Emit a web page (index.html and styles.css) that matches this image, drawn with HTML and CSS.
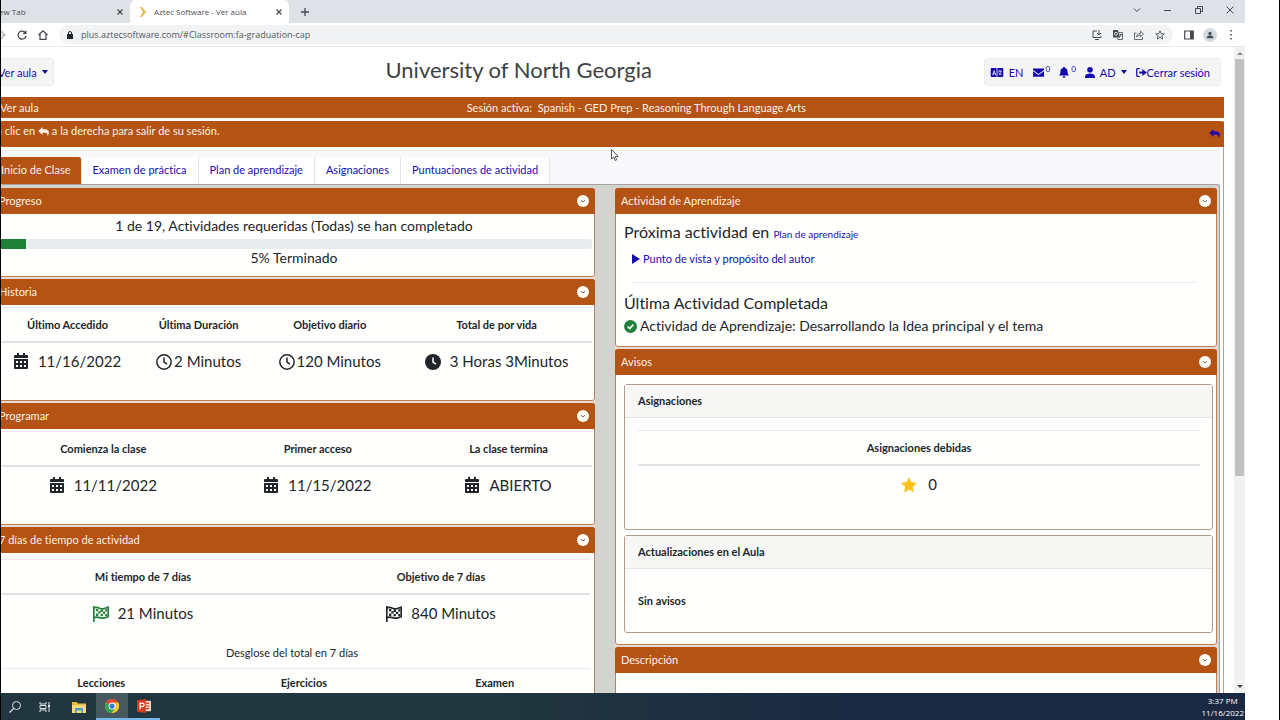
FILE: index.html
```html
<!DOCTYPE html>
<html lang="es">

<head>
  <meta charset="UTF-8" />
  <meta name="viewport" content="width=device-width, initial-scale=1.0" />
  <title>Aztec Software - Ver aula</title>
  <link rel="stylesheet" href="styles.css">
</head>

<body>
  <!-- shared icons -->
  <svg class="sprite" aria-hidden="true">
    <symbol id="calendar" viewBox="0 0 14 16">
      <path d="M3 0h2v2h4V0h2v2h2a1 1 0 0 1 1 1v2H0V3a1 1 0 0 1 1-1h2zM0 6h14v9a1 1 0 0 1-1 1H1a1 1 0 0 1-1-1zm2 2v2h2V8zm4 0v2h2V8zm4 0v2h2V8zM2 12v2h2v-2zm4 0v2h2v-2zm4 0v2h2v-2z" fill="currentColor" fill-rule="evenodd" />
    </symbol>
    <symbol id="clock" viewBox="0 0 16 16">
      <circle cx="8" cy="8" r="7.2" fill="none" stroke="currentColor" stroke-width="1.5" />
      <path d="M8 3.5V8l3 2.2" fill="none" stroke="currentColor" stroke-width="1.5" />
    </symbol>
    <symbol id="clock-solid" viewBox="0 0 16 16">
      <circle cx="8" cy="8" r="8" fill="currentColor" />
      <path d="M8 3.5V8l3 2.2" fill="none" stroke="#fff" stroke-width="1.5" />
    </symbol>
    <symbol id="flag" viewBox="0 0 16 16">
      <path d="M.8 0v16M1 2c4-2 6 1.500 9 .8 2-.4 3-1 5.200-1.600v9.600c-2.200.6-3.200 1.200-5.200 1.400-3 .4-5-2.400-9-.6" fill="none" stroke="currentColor" stroke-width="1.700" />
      <path d="M3 3h2.300v2.300H3zm4.600.6h2.300v2.300H7.600zM5.300 5.300h2.300v2.300H5.300zm4.600.4h2.300V8H9.900zM3 7.600h2.300v2.300H3zm4.600.4h2.300v2.300H7.600zm4.600-4.700h2V5.600h-2zm0 4.700h2v2h-2z" fill="currentColor" />
    </symbol>
    <symbol id="chevron" viewBox="0 0 12 12">
      <circle cx="6" cy="6" r="6" fill="#fffdf5" />
      <path d="M4 5.200l2 1.800 2-1.800" fill="none" stroke="#6b6b63" stroke-width="1" />
    </symbol>
    <symbol id="reply" viewBox="0 0 12 10">
      <path d="M5 0v2.500h2.500C10.500 2.500 12 4 12 6.500c0 1.500-.6 2.800-1.700 3.500.5-2.500-.5-3.700-3-3.700H5v2.500L0 4.400z" fill="currentColor" />
    </symbol>
    <symbol id="close" viewBox="0 0 8 8">
      <path d="M1.500 1.500l5 5M6.500 1.500l-5 5" fill="none" stroke="currentColor" stroke-width="1.200" />
    </symbol>
  </svg>

  <div class="window">
    <div class="tab-strip">
      <div class="browser-tab first-tab">
        <span>New Tab</span>
        <button class="icon-btn" aria-label="Close tab"><svg class="x"><use href="#close" /></svg></button>
      </div>
      <div class="browser-tab active">
        <svg class="favicon" viewBox="0 0 8 10"><path d="M1 0h2l4 5-4 5H1l3-5z" fill="#f0b445" /></svg>
        <span>Aztec Software - Ver aula</span>
        <button class="icon-btn" aria-label="Close tab"><svg class="x"><use href="#close" /></svg></button>
      </div>
      <button class="icon-btn new-tab" aria-label="New tab"><svg viewBox="0 0 8 8"><path d="M4 0v8M0 4h8" stroke="currentColor" stroke-width="1.300" /></svg></button>
      <div class="window-buttons">
        <button class="icon-btn" aria-label="Search tabs"><svg viewBox="0 0 8 8"><path d="M1 2.500l3 3 3-3" fill="none" stroke="currentColor" /></svg></button>
        <button class="icon-btn" aria-label="Minimize"><svg viewBox="0 0 8 8"><path d="M0 4.500h7" stroke="currentColor" /></svg></button>
        <button class="icon-btn" aria-label="Restore"><svg viewBox="0 0 8 8"><path d="M.5 2.500h5v5h-5zM2.500 2V.5h5v5H6" fill="none" stroke="currentColor" /></svg></button>
        <button class="icon-btn" aria-label="Close"><svg viewBox="0 0 8 8"><path d="M.5.5l7 7M7.500.5l-7 7" stroke="currentColor" /></svg></button>
      </div>
    </div>

    <div class="toolbar">
      <button class="icon-btn" aria-label="Forward"><svg viewBox="0 0 10 10"><path d="M0 5h9M5 1l4 4-4 4" fill="none" stroke="#b5b8bb" stroke-width="1.200" /></svg></button>
      <button class="icon-btn" aria-label="Reload"><svg viewBox="0 0 10 10"><path d="M8.500 3A4 4 0 1 0 9 6" fill="none" stroke="currentColor" stroke-width="1.300" /><path d="M9.500 0v4h-4z" fill="currentColor" /></svg></button>
      <button class="icon-btn" aria-label="Home"><svg viewBox="0 0 10 10"><path d="M.5 5L5 .8 9.500 5M2 4v5.300h6V4" fill="none" stroke="currentColor" stroke-width="1.200" /></svg></button>
      <div class="address">
        <svg class="lock" viewBox="0 0 6 8"><path d="M0 3h6v5H0z" fill="currentColor" /><path d="M1.500 3V2a1.500 1.500 0 0 1 3 0v1" fill="none" stroke="currentColor" /></svg>
        <input type="text" aria-label="Address" value="plus.aztecsoftware.com/#Classroom:fa-graduation-cap" />
        <button class="icon-btn" aria-label="Install"><svg viewBox="0 0 10 10"><path d="M5 1H1v6.500h8V6M3 9.500h4M7 0v4M5 3l2 2 2-2" fill="none" stroke="currentColor" /></svg></button>
        <button class="icon-btn" aria-label="Translate"><svg viewBox="0 0 10 10"><path d="M0 0h5l2 7.500H0z" fill="currentColor" /><path d="M6 2.500h3.500v7H5L4.500 8M6.500 4.500h2.500M7.700 4v1M6.500 7.500l2-3" fill="none" stroke="currentColor" stroke-width=".8" /><circle cx="3" cy="3.800" r="1.500" fill="none" stroke="#fff" stroke-width=".8" /></svg></button>
        <button class="icon-btn" aria-label="Share"><svg viewBox="0 0 10 10"><path d="M2.500 3H.5v6.500h8V7M2.500 7c.3-2.500 1.500-3.500 4-3.700V1.200L9.500 4l-3 2.700V5C5 5 3.500 5.500 2.500 7z" fill="none" stroke="currentColor" stroke-width=".8" /></svg></button>
        <button class="icon-btn" aria-label="Bookmark"><svg viewBox="0 0 10 10"><path d="M5 .8l1.200 2.900 3.100.2-2.400 2 .8 3.100L5 7.300 2.300 9l.8-3.100-2.400-2 3.100-.2z" fill="none" stroke="currentColor" stroke-width=".9" /></svg></button>
      </div>
      <div class="toolbar-end">
        <button class="icon-btn" aria-label="Side panel"><svg viewBox="0 0 10 10"><path d="M.7 1h8.600v8H.7z" fill="none" stroke="currentColor" stroke-width="1.200" /><path d="M6 1h3v8H6z" fill="currentColor" /></svg></button>
        <button class="icon-btn profile" aria-label="Profile"><svg viewBox="0 0 10 10"><circle cx="5" cy="3" r="2" fill="currentColor" /><path d="M1 9V8c0-3 8-3 8 0v1z" fill="currentColor" /></svg></button>
        <button class="icon-btn" aria-label="Menu"><svg viewBox="0 0 10 10"><path d="M4.300 0h1.500v1.500H4.300zm0 4h1.500v1.500H4.300zm0 4h1.500v1.500H4.300z" fill="currentColor" /></svg></button>
      </div>
    </div>

    <div class="viewport">
      <div class="page">
        <header class="site-header">
          <button class="class-menu">Ver aula <span class="caret"></span></button>
          <h1>University of North Georgia</h1>
          <nav class="user-menu">
            <a href="#"><svg class="lang-icon" viewBox="0 0 14 10"><rect width="14" height="10" rx="1" fill="currentColor" /><path d="M2 8l1.800-5L5.600 8M2.600 6.500H5M8.500 3.500H12M10.200 2.500v1M9 7.500c1.500-.6 2.300-2 2.500-4M9 5c.6 1.500 1.500 2.200 3 2.600M7 0v10" fill="none" stroke="#f4f4f4" stroke-width=".9" /></svg>EN</a>
            <a href="#" aria-label="Mensajes"><svg class="mail-icon" viewBox="0 0 12 9"><path d="M0 0h12v1.800L6 6 0 1.800zM0 3l6 4.200L12 3v6H0z" fill="currentColor" /></svg><sup>0</sup></a>
            <a href="#" aria-label="Notificaciones"><svg class="bell-icon" viewBox="0 0 10 11"><path d="M5 0c.6 0 1 .4 1 1 2 .5 2.600 2 2.600 4 0 1.500.4 2.300 1.400 3.500H0C1 7.300 1.400 6.500 1.400 5c0-2 .6-3.500 2.600-4 0-.6.4-1 1-1zM3.600 9.300h2.800c0 2-2.800 2-2.800 0z" fill="currentColor" /></svg><sup>0</sup></a>
            <a href="#"><svg class="user-icon" viewBox="0 0 10 11"><circle cx="5" cy="2.800" r="2.800" fill="currentColor" /><path d="M0 11V9.500C0 5.500 10 5.500 10 9.500V11z" fill="currentColor" /></svg>AD<span class="caret"></span></a>
            <a href="#" class="logout"><svg class="logout-icon" viewBox="0 0 12 10"><path d="M4 .8H1.500c-.5 0-.8.300-.8.800v6.800c0 .5.300.8.800.8H4" fill="none" stroke="currentColor" stroke-width="1.400" /><path d="M3.500 3.800H7V1l5 4-5 4V6.200H3.500z" fill="currentColor" /></svg>Cerrar sesión</a>
          </nav>
        </header>

        <div class="session-bar">
          <span>Ver aula</span>
          <span class="session">Sesión activa:&nbsp; Spanish - GED Prep - Reasoning Through Language Arts</span>
        </div>

        <main class="classroom">
          <div class="exit-bar">
            <p>Haga clic en <svg class="reply-icon"><use href="#reply" /></svg> a la derecha para salir de su sesión.</p>
            <a href="#" aria-label="Salir"><svg class="reply-icon"><use href="#reply" /></svg></a>
          </div>

          <nav class="tabs">
            <a href="#" class="current">Inicio de Clase</a>
            <a href="#">Examen de práctica</a>
            <a href="#">Plan de aprendizaje</a>
            <a href="#">Asignaciones</a>
            <a href="#">Puntuaciones de actividad</a>
          </nav>

          <div class="columns">
            <div class="column">
              <section class="panel">
                <div class="panel-header"><h2>Progreso</h2><button class="icon-btn" aria-label="Contraer"><svg><use href="#chevron" /></svg></button></div>
                <div class="panel-body progress-body">
                  <label for="progress">1 de 19, Actividades requeridas (Todas) se han completado</label>
                  <progress id="progress" max="100" value="5"></progress>
                  <p>5% Terminado</p>
                </div>
              </section>

              <section class="panel">
                <div class="panel-header"><h2>Historia</h2><button class="icon-btn" aria-label="Contraer"><svg><use href="#chevron" /></svg></button></div>
                <div class="panel-body stats-body">
                  <table class="stats history">
                    <thead>
                      <tr><th>Último Accedido</th><th>Última Duración</th><th>Objetivo diario</th><th>Total de por vida</th></tr>
                    </thead>
                    <tbody>
                      <tr>
                        <td><svg class="calendar"><use href="#calendar" /></svg>11/16/2022</td>
                        <td><svg class="clock tight"><use href="#clock" /></svg>2 Minutos</td>
                        <td><svg class="clock tight"><use href="#clock" /></svg>120 Minutos</td>
                        <td><svg class="clock"><use href="#clock-solid" /></svg>3 Horas 3Minutos</td>
                      </tr>
                    </tbody>
                  </table>
                </div>
              </section>

              <section class="panel">
                <div class="panel-header"><h2>Programar</h2><button class="icon-btn" aria-label="Contraer"><svg><use href="#chevron" /></svg></button></div>
                <div class="panel-body stats-body">
                  <table class="stats schedule">
                    <thead>
                      <tr><th>Comienza la clase</th><th>Primer acceso</th><th>La clase termina</th></tr>
                    </thead>
                    <tbody>
                      <tr>
                        <td><svg class="calendar"><use href="#calendar" /></svg>11/11/2022</td>
                        <td><svg class="calendar"><use href="#calendar" /></svg>11/15/2022</td>
                        <td><svg class="calendar"><use href="#calendar" /></svg>ABIERTO</td>
                      </tr>
                    </tbody>
                  </table>
                </div>
              </section>

              <section class="panel">
                <div class="panel-header"><h2>7 días de tiempo de actividad</h2><button class="icon-btn" aria-label="Contraer"><svg><use href="#chevron" /></svg></button></div>
                <div class="panel-body week-body">
                  <table class="stats">
                    <thead>
                      <tr><th>Mi tiempo de 7 días</th><th>Objetivo de 7 días</th></tr>
                    </thead>
                    <tbody>
                      <tr>
                        <td><svg class="clock green"><use href="#flag" /></svg>21 Minutos</td>
                        <td><svg class="clock"><use href="#flag" /></svg>840 Minutos</td>
                      </tr>
                    </tbody>
                  </table>
                  <table class="stats breakdown">
                    <caption>Desglose del total en 7 días</caption>
                    <thead>
                      <tr><th>Lecciones</th><th>Ejercicios</th><th>Examen</th></tr>
                    </thead>
                  </table>
                </div>
              </section>
            </div>

            <div class="column">
              <section class="panel">
                <div class="panel-header"><h2>Actividad de Aprendizaje</h2><button class="icon-btn" aria-label="Contraer"><svg><use href="#chevron" /></svg></button></div>
                <div class="panel-body activity-body">
                  <h3>Próxima actividad en <a href="#">Plan de aprendizaje</a></h3>
                  <a href="#" class="next-activity"><svg viewBox="0 0 8 10"><path d="M0 0l8 5-8 5z" fill="currentColor" /></svg>Punto de vista y propósito del autor</a>
                  <hr />
                  <h3>Última Actividad Completada</h3>
                  <p class="last-activity"><svg viewBox="0 0 14 14"><circle cx="7" cy="7" r="7" fill="#1f8038" /><path d="M4 7.200l2.200 2.100L10 5" fill="none" stroke="#fff" stroke-width="1.800" /></svg>Actividad de Aprendizaje: Desarrollando la Idea principal y el tema</p>
                </div>
              </section>

              <section class="panel">
                <div class="panel-header"><h2>Avisos</h2><button class="icon-btn" aria-label="Contraer"><svg><use href="#chevron" /></svg></button></div>
                <div class="panel-body notices-body">
                  <div class="card">
                    <h3>Asignaciones</h3>
                    <div class="due">
                      <table class="stats">
                        <thead>
                          <tr><th>Asignaciones debidas</th></tr>
                        </thead>
                        <tbody>
                          <tr><td><svg class="clock star" viewBox="0 0 16 16"><path d="M8 0l2.300 5.100 5.700.8-4.200 3.900 1.100 5.700L8 12.800l-4.900 2.700 1.100-5.700L0 5.900l5.700-.8z" fill="currentColor" /></svg>0</td></tr>
                        </tbody>
                      </table>
                    </div>
                  </div>
                  <div class="card">
                    <h3>Actualizaciones en el Aula</h3>
                    <p>Sin avisos</p>
                  </div>
                </div>
              </section>

              <section class="panel">
                <div class="panel-header"><h2>Descripción</h2><button class="icon-btn" aria-label="Contraer"><svg><use href="#chevron" /></svg></button></div>
                <div class="panel-body description-body"></div>
              </section>
            </div>
          </div>
        </main>
      </div>

      <div class="scrollbar">
        <span class="arrow up"></span>
        <span class="thumb"></span>
        <span class="track"></span>
        <span class="arrow down"></span>
      </div>
    </div>

    <div class="taskbar">
      <button class="task" aria-label="Search"><svg viewBox="0 0 14 14"><circle cx="8.500" cy="5.500" r="4" fill="none" stroke="#dde4e8" /><path d="M5.700 8.300L1.500 12.500" stroke="#dde4e8" stroke-width="1.200" /></svg></button>
      <button class="task" aria-label="Task view"><svg viewBox="0 0 14 14"><path d="M2 2v2h6V2M2 12v-2h6v2M2 5.500h6v3H2zM11 2v10" fill="none" stroke="#dde4e8" /><path d="M10 5h2v2h-2z" fill="#dde4e8" /></svg></button>
      <button class="task folder" aria-label="File Explorer"><svg viewBox="0 0 14 14"><path d="M0 2h5l1 1.500h8V13H0z" fill="#e9b93b" /><path d="M0 5h14v8H0z" fill="#fadb75" /><path d="M3 8h8v5H9.500v-2.500h-5V13H3z" fill="#4d9bc7" /></svg></button>
      <button class="task open active" aria-label="Chrome"><svg viewBox="0 0 16 16"><circle cx="8" cy="8" r="8" fill="#f8c72c" /><path d="M8 8L1.100 4A8 8 0 0 1 14.900 4z" fill="#e24335" /><path d="M1.100 4A8 8 0 0 0 8 16l3.500-6L8 8z" fill="#2da450" /><path d="M8 4h6.900A8 8 0 0 1 8 16l3.500-6z" fill="#f8c72c" /><circle cx="8" cy="8" r="4" fill="#fff" /><circle cx="8" cy="8" r="3" fill="#3c79d8" /></svg></button>
      <button class="task open" aria-label="PowerPoint"><svg viewBox="0 0 16 16"><path d="M7 2h9v12H7z" fill="#f6d5cb" /><path d="M10 5h4M10 8h4M10 11h4" stroke="#d04423" stroke-width="1.200" /><path d="M0 1.500L10 0v16L0 14.500z" fill="#d43c20" /><path d="M3.500 12V4.800h2.200c3 0 3 4 0 4H3.500" fill="none" stroke="#fff" stroke-width="1.400" /></svg></button>
      <div class="tray"><span>3:37 PM</span><span>11/16/2022</span></div>
    </div>

    <svg class="cursor" viewBox="0 0 8 12"><path d="M.5.5v9.500l2.200-2 1.500 3.500 1.500-.7-1.500-3.300h3z" fill="#fff" stroke="#444" stroke-width=".9" /></svg>
  </div>
</body>

</html>
```

FILE: styles.css
```css
* {
  box-sizing: border-box;
}

body {
  margin: 0;
  height: 100vh;
  display: flex;
  background-color: #fff;
  border-left: 1px solid #000;
  border-right: 1px solid #000;
  font-family: "Trebuchet MS", Lato, sans-serif;
  font-size: 11px;
  font-variant-ligatures: none;
  color: #212529;
}

h1, h2, h3, p {
  margin: 0;
  font-weight: 400;
}

a {
  color: #1a0dab;
  text-decoration: none;
}

button, input {
  font: inherit;
  color: inherit;
}

svg {
  flex: none;
}

.sprite {
  position: absolute;
  width: 0;
  height: 0;
}

.window {
  position: relative;
  flex: 1;
  min-width: 0;
  margin-right: 34px;
  display: flex;
  flex-direction: column;
  overflow: hidden;
}

.icon-btn {
  display: flex;
  align-items: center;
  justify-content: center;
  padding: 0;
  border: 0;
  background: none;
  color: #45494d;
}

.icon-btn svg {
  width: 10px;
  height: 10px;
}

.icon-btn .x {
  width: 8px;
  height: 8px;
}

/* browser */
.tab-strip,
.toolbar,
.tray {
  font-family: "Open Sans", sans-serif;
}

.tab-strip {
  flex: none;
  display: flex;
  height: 23px;
  background-color: #dee2e6;
  font-size: 8px;
  color: #4a4d51;
}

.browser-tab {
  display: flex;
  align-items: center;
  justify-content: space-between;
  width: 159px;
  padding: 0 6px 0 9px;
}

.first-tab {
  width: 137px;
  margin-left: -8px;
  padding: 0 6px 0 0;
}

.browser-tab.active {
  border-radius: 6px 6px 0 0;
  background-color: #fff;
}

.browser-tab.active span {
  flex: 1;
  padding-left: 7px;
}

.favicon {
  width: 8px;
  height: 10px;
}

.new-tab {
  width: 32px;
}

.new-tab svg,
.window-buttons svg {
  width: 8px;
  height: 8px;
}

.window-buttons {
  display: flex;
  gap: 23px;
  margin-left: auto;
  padding: 0 11px 4px 0;
}

.toolbar {
  flex: none;
  display: flex;
  align-items: center;
  gap: 11px;
  height: 24px;
  padding-right: 9px;
  margin-left: -5px;
  border-bottom: 1px solid #e6e8ea;
}

.address {
  flex: 1;
  display: flex;
  align-items: center;
  gap: 11px;
  height: 19px;
  padding: 0 8px;
  border-radius: 10px;
  background-color: #f1f3f4;
}

.address input {
  flex: 1;
  min-width: 0;
  margin-left: -3px;
  padding: 0;
  border: 0;
  outline: 0;
  background: none;
  font-size: 9px;
  color: #54585c;
}

.lock {
  width: 6px;
  height: 8px;
}

.toolbar-end {
  display: flex;
  align-items: center;
  gap: 9px;
}

.profile {
  width: 14px;
  height: 14px;
  border-radius: 50%;
  background-color: #d3dae3;
}

.profile svg {
  width: 8px;
  height: 8px;
}

.viewport {
  flex: 1;
  min-height: 0;
  display: flex;
  overflow: hidden;
}

/* the page is scrolled a little to the right */
.page {
  flex: 1;
  min-width: 0;
  margin: 0 10px 0 -12px;
}

.scrollbar {
  display: flex;
  flex-direction: column;
  align-items: center;
  width: 11px;
  padding: 5px 0;
  background-color: #f1f1f1;
}

.arrow {
  border: 3px solid transparent;
}

.up {
  border-top: 0;
  border-bottom-color: #888;
  margin-bottom: 4px;
}

.down {
  border-bottom: 0;
  border-top-color: #444;
}

.thumb {
  flex: 2;
  width: 9px;
  background-color: #c1c1c1;
}

.track {
  flex: 1;
}

/* header */
.site-header {
  display: flex;
  align-items: center;
  justify-content: space-between;
  height: 50px;
  padding-right: 3px;
}

.site-header h1 {
  padding-bottom: 6px;
  font-size: 22px;
  color: #3d4144;
}

.class-menu,
.user-menu {
  display: flex;
  align-items: center;
  height: 28px;
  border: 1px solid #ececee;
  border-radius: 3px;
  background-color: #f4f4f5;
}

.class-menu {
  gap: 5px;
  padding: 0 5px 0 8px;
  color: #1a0dab;
}

.caret {
  display: inline-block;
  border: 3px solid transparent;
  border-top: 4px solid #10108c;
  border-bottom: 0;
}

.user-menu {
  gap: 9px;
  padding: 0 10px 0 5px;
}

.user-menu a {
  display: flex;
  align-items: center;
  gap: 5px;
  color: #1508b0;
}

.user-menu a[aria-label] {
  gap: 2px;
}

.user-menu sup {
  font-size: 8px;
  line-height: 8px;
  padding-bottom: 6px;
  vertical-align: baseline;
}

.user-menu .logout {
  gap: 0;
}

.lang-icon {
  width: 14px;
  height: 9px;
}

.mail-icon,
.logout-icon {
  width: 11px;
  height: 9px;
}

.bell-icon,
.user-icon {
  width: 10px;
  height: 11px;
}

.session-bar {
  display: flex;
  gap: 10px;
  height: 21px;
  margin-bottom: 3px;
  padding: 0 0 0 11px;
  background-color: #b45313;
  line-height: 21px;
  color: #fff1e6;
}

.session {
  flex: 1;
  text-align: center;
}

.classroom {
  border-right: 1px solid #c99a7c;
  padding-right: 3px;
}

.exit-bar {
  display: flex;
  justify-content: space-between;
  height: 26px;
  margin-right: -4px;
  margin-bottom: 3px;
  border-radius: 3px 3px 0 0;
  background-color: #b45313;
  line-height: 20px;
  color: #fff1e6;
}

.exit-bar p {
  margin-left: -12px;
}

.exit-bar a {
  padding: 2px 4px 0 0;
  color: #2a0a9c;
}

.reply-icon {
  width: 11px;
  height: 9px;
  vertical-align: -1px;
}

.tabs {
  display: flex;
  height: 34px;
  padding: 6px 0 0 4px;
  border-top: 1px solid #ececee;
  background-color: #f8f8fa;
}

.tabs a {
  padding: 0 11px;
  border-right: 1px solid #e6e6ea;
  background-color: #fff;
  line-height: 26px;
}

.tabs .current {
  padding: 0 10px 0 8px;
  border-radius: 3px 3px 0 0;
  background-color: #b45313;
  color: #fff1e6;
}

.columns {
  display: grid;
  grid-template-columns: 1fr 1fr;
  gap: 20px;
  padding: 3px 2px 0 4px;
  border: 1px solid #a9a39c;
  border-left: 0;
  border-bottom: 0;
  border-radius: 0 3px 0 0;
  background-color: #d3d3cf;
}

.column {
  min-width: 0;
  display: flex;
  flex-direction: column;
  gap: 2px;
  background-color: #ead9cc;
}

/* panels */
.panel {
  border: 1px solid #b8805c;
  border-radius: 3px;
  background-color: #fffffd;
}

.panel-header {
  display: flex;
  align-items: center;
  justify-content: space-between;
  height: 26px;
  margin: -1px -1px 0;
  padding: 0 6px;
  border-radius: 3px 3px 0 0;
  background-color: #b45313;
  color: #fff1e6;
}

.panel-header h2 {
  padding-bottom: 2px;
  font-size: 11px;
}

.panel-header svg {
  width: 12px;
  height: 12px;
}

.progress-body {
  height: 62px;
  padding: 2px;
  text-align: center;
  font-size: 14px;
}

.progress-body label {
  display: block;
  line-height: 20px;
}

.progress-body progress {
  display: block;
  appearance: none;
  width: 100%;
  height: 10px;
  margin: 3px 0 0;
  border: 0;
}

.progress-body p {
  line-height: 18px;
}

progress::-webkit-progress-bar {
  border-radius: 3px;
  background-color: #e9ecef;
}

progress::-webkit-progress-value {
  background-color: #1f8038;
}

.stats-body {
  height: 95px;
  padding: 2px 2px 0;
}

.stats {
  width: 100%;
  table-layout: fixed;
  border-collapse: collapse;
  text-align: center;
}

.stats th {
  height: 34px;
  padding: 0;
  border-top: 1px solid #e9e9ea;
  border-bottom: 2px solid #dfe2e4;
  font-size: 11px;
  font-weight: 700;
}

.stats td {
  height: 37px;
  padding: 0;
  font-size: 15px;
  line-height: 20px;
  white-space: nowrap;
}

.history th:nth-child(1) { width: 24%; }
.history th:nth-child(2) { width: 20%; }
.history th:nth-child(3) { width: 24%; }

.schedule th:nth-child(1),
.schedule th:nth-child(2) { width: 36%; }

.calendar {
  width: 14px;
  height: 16px;
  margin-right: 10px;
  vertical-align: -2px;
}

.clock {
  width: 16px;
  height: 16px;
  margin-right: 9px;
  vertical-align: -3px;
}

.tight {
  margin-right: 2px;
}

.green {
  color: #1f8038;
}

.star {
  margin-right: 11px;
  color: #fbc11c;
}

.week-body {
  padding: 6px 4px 0 0;
}

.breakdown {
  margin-top: 12px;
}

.breakdown caption {
  height: 25px;
  line-height: 20px;
}

.breakdown th {
  height: 30px;
}

.breakdown th:nth-child(1) { width: 36%; }
.breakdown th:nth-child(2) { width: 32%; }

.activity-body {
  height: 132px;
  padding: 8px 19px 0 8px;
}

.activity-body h3 {
  font-size: 16px;
  line-height: 20px;
}

.activity-body h3 a {
  font-size: 10px;
}

.next-activity {
  display: flex;
  align-items: center;
  gap: 3px;
  margin-top: 5px;
  padding-left: 8px;
  line-height: 20px;
}

.next-activity svg {
  width: 8px;
  height: 10px;
}

.activity-body hr {
  margin: 13px 0 10px 8px;
  border: 0;
  border-top: 1px solid #ececec;
}

.last-activity {
  display: flex;
  align-items: center;
  gap: 3px;
  font-size: 14px;
  line-height: 26px;
}

.last-activity svg {
  width: 13px;
  height: 13px;
}

.notices-body {
  display: flex;
  flex-direction: column;
  gap: 5px;
  padding: 9px 3px 11px 8px;
}

.card {
  border: 1px solid #b09c8c;
  border-radius: 3px;
}

.card h3 {
  padding-left: 13px;
  border-bottom: 1px solid #e4e4e4;
  background-color: #f7f7f6;
  font-size: 11px;
  font-weight: 700;
  line-height: 32px;
}

.card p {
  padding: 16px 13px;
  font-weight: 700;
  line-height: 31px;
}

.due {
  height: 111px;
  padding: 12px 12px 0 13px;
}

.description-body {
  height: 200px;
}

/* windows taskbar */
.taskbar {
  flex: none;
  display: flex;
  height: 27px;
  background: linear-gradient(90deg, #21363e 40%, #1a2842 70%);
}

.task {
  display: flex;
  align-items: center;
  justify-content: center;
  width: 27px;
  padding: 0;
  border: 0;
  background: none;
}

.task svg {
  width: 14px;
  height: 14px;
}

.task + .task {
  width: 34px;
}

.task + .open {
  width: 32px;
  border-bottom: 2px solid #76b9ed;
}

.task.active {
  background-color: #47595f;
}

.tray {
  display: flex;
  flex-direction: column;
  align-items: center;
  margin-left: auto;
  padding: 2px 1px 0 0;
  font-size: 8px;
  line-height: 12px;
  color: #fff;
}

.cursor {
  position: absolute;
  left: 610px;
  top: 149px;
  width: 8px;
  height: 12px;
}
```
